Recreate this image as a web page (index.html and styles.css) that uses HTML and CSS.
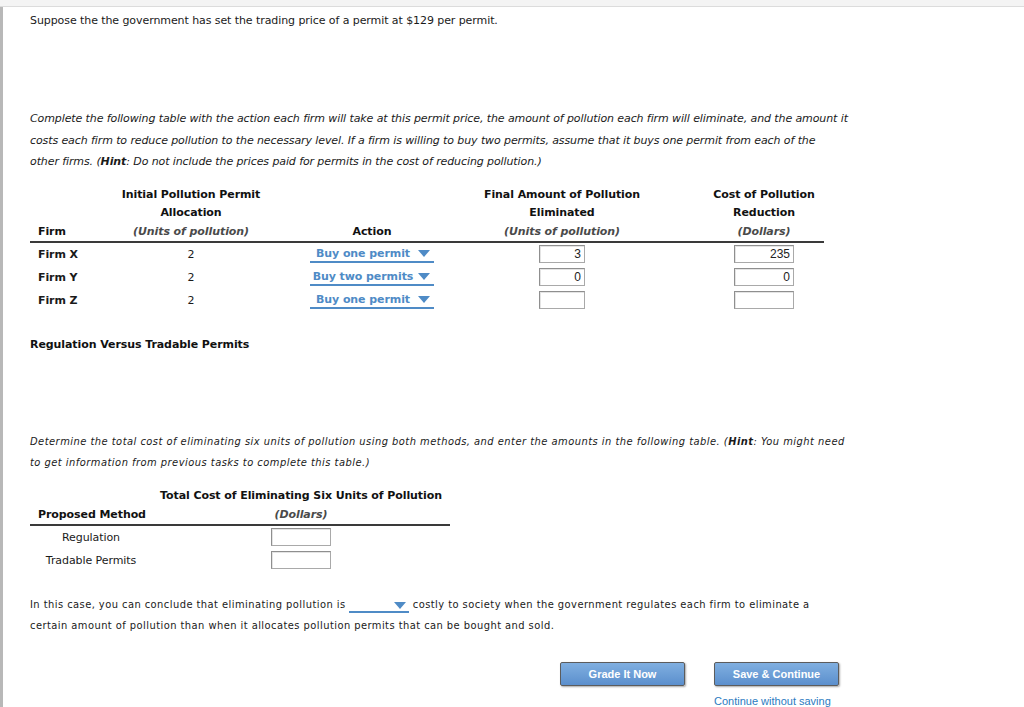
FILE: index.html
```html
<!DOCTYPE html>
<html lang="en">
<head>
<meta charset="utf-8">
<title>Tradable Permits</title>
<link rel="stylesheet" href="styles.css">
</head>
<body>
<div class="topbar"></div>
<div class="page">
  <p class="intro">Suppose the the government has set the trading price of a permit at $129 per permit.</p>

  <p class="instr">Complete the following table with the action each firm will take at this permit price, the amount of pollution each firm will eliminate, and the amount it<br>costs each firm to reduce pollution to the necessary level. If a firm is willing to buy two permits, assume that it buys one permit from each of the<br>other firms. (<b>Hint</b>: Do not include the prices paid for permits in the cost of reducing pollution.)</p>

  <div class="t1">
    <div class="th left">Firm</div>
    <div class="th"><span class="ttl">Initial Pollution Permit<br>Allocation</span><span class="units">(Units of pollution)</span></div>
    <div class="th">Action</div>
    <div class="th"><span class="ttl">Final Amount of Pollution<br>Eliminated</span><span class="units">(Units of pollution)</span></div>
    <div class="th cost"><span class="ttl">Cost of Pollution<br>Reduction</span><span class="units">(Dollars)</span></div>
    <div class="rule"></div>

    <div class="td left firm">Firm X</div>
    <div class="td">2</div>
    <div class="td"><span class="dd"><span class="dd-text">Buy one permit</span><span class="caret"></span></span></div>
    <div class="td"><span class="inp w46">3</span></div>
    <div class="td cost"><span class="inp w60">235</span></div>

    <div class="td left firm">Firm Y</div>
    <div class="td">2</div>
    <div class="td"><span class="dd"><span class="dd-text">Buy two permits</span><span class="caret"></span></span></div>
    <div class="td"><span class="inp w46">0</span></div>
    <div class="td cost"><span class="inp w60">0</span></div>

    <div class="td left firm">Firm Z</div>
    <div class="td">2</div>
    <div class="td"><span class="dd"><span class="dd-text">Buy one permit</span><span class="caret"></span></span></div>
    <div class="td"><span class="inp w46"></span></div>
    <div class="td cost"><span class="inp w60"></span></div>
  </div>

  <h3 class="section">Regulation Versus Tradable Permits</h3>

  <p class="instr narrow">Determine the total cost of eliminating six units of pollution using both methods, and enter the amounts in the following table. (<b>Hint</b>: You might need<br>to get information from previous tasks to complete this table.)</p>

  <div class="t2">
    <div class="th left"></div>
    <div class="th top">Total Cost of Eliminating Six Units of Pollution</div>
    <div class="th left">Proposed Method</div>
    <div class="th"><span class="units">(Dollars)</span></div>
    <div class="rule"></div>

    <div class="td">Regulation</div>
    <div class="td"><span class="inp w60"></span></div>
    <div class="td">Tradable Permits</div>
    <div class="td"><span class="inp w60"></span></div>
  </div>

  <p class="concl">In this case, you can conclude that eliminating pollution is <span class="dd small"><span class="caret"></span></span> costly to society when the government regulates each firm to eliminate a<br>certain amount of pollution than when it allocates pollution permits that can be bought and sold.</p>

  <div class="actions">
    <button class="btn" type="button">Grade It Now</button>
    <div class="save">
      <button class="btn" type="button">Save &amp; Continue</button>
      <a class="link" href="#">Continue without saving</a>
    </div>
  </div>
</div>
</body>
</html>
```

FILE: styles.css
```css
html, body {
  margin: 0;
  padding: 0;
  background: #fff;
}
body {
  font-family: "DejaVu Sans", Verdana, sans-serif;
  font-size: 11px;
  letter-spacing: -0.08px;
  color: #1a1a1a;
}
.topbar {
  height: 6px;
  background: #f4f4f4;
  border-bottom: 1px solid #dcdcdc;
}
.page {
  border-left: 3px solid #b8b8b8;
  padding: 7px 0 0 27px;
  min-height: 700px;
  box-sizing: border-box;
}
p { margin: 0; }
.intro {
  line-height: 14px;
}
.instr {
  margin-top: 80px;
  font-style: italic;
  letter-spacing: -0.1px;
  line-height: 21.5px;
  width: 900px;
}
.instr b { font-style: italic; }

/* table 1 */
.t1 {
  margin-top: 13px;
  width: 794px;
  display: grid;
  grid-template-columns: 80px 162px 200px 180px 172px;
}
.th {
  font-weight: bold;
  text-align: center;
  line-height: 18px;
  display: flex;
  flex-direction: column;
  justify-content: flex-end;
  color: #111;
}
.th.left, .td.left {
  text-align: left;
  padding-left: 8px;
}
.ttl { display: block; }
.units {
  display: block;
  margin-top: 1px;
  font-style: italic;
  color: #4a4a4a;
}
.cost { padding-left: 52px; }
.rule {
  grid-column: 1 / -1;
  height: 2px;
  background: #3a3a3a;
}
.td {
  height: 23px;
  display: flex;
  align-items: center;
  justify-content: center;
}
.td.left { justify-content: flex-start; }
.firm { font-weight: bold; }

.inp {
  display: inline-block;
  box-sizing: border-box;
  height: 18px;
  border: 1px solid #a9a9a9;
  border-top-color: #8f8f8f;
  border-left-color: #8f8f8f;
  box-shadow: inset 1px 1px 0 #e4e4e4;
  font-family: "Liberation Sans", Arial, sans-serif;
  font-size: 12px;
  letter-spacing: 0;
  line-height: 16px;
  text-align: right;
  padding-right: 3px;
  color: #222;
  background: #fff;
}
.w46 { width: 46px; }
.w60 { width: 60px; }

.dd {
  display: inline-flex;
  align-items: center;
  width: 124px;
  height: 17px;
  border-bottom: 2px solid #4f8bc6;
  color: #4f8bc6;
  font-weight: bold;
  box-sizing: border-box;
  vertical-align: middle;
}
.dd-text {
  flex: 1;
  text-align: center;
  padding-right: 2px;
}
.caret {
  width: 0;
  height: 0;
  border-left: 6px solid transparent;
  border-right: 6px solid transparent;
  border-top: 7px solid #4f8bc6;
  margin-right: 4px;
}

.section {
  margin: 26px 0 0;
  font-size: 11px;
  line-height: 14px;
  font-weight: bold;
  color: #111;
}

.narrow {
  margin-top: 79px;
  font-stretch: condensed;
  font-family: "DejaVu Sans Condensed", "DejaVu Sans", sans-serif;
  font-size: 11px;
  letter-spacing: 0.48px;
  width: 900px;
}

/* table 2 */
.t2 {
  margin-top: 13px;
  width: 420px;
  display: grid;
  grid-template-columns: 122px 298px;
}
.t2 .top { margin-bottom: 1px; }
.t2 .units { margin-top: 0; }

.concl {
  margin-top: 22px;
  line-height: 21.5px;
  font-family: "DejaVu Sans Condensed", "DejaVu Sans", sans-serif;
  font-stretch: condensed;
  letter-spacing: 0.45px;
  width: 900px;
}
.dd.small {
  display: inline-flex;
  justify-content: flex-end;
  align-items: flex-start;
  width: 60px;
  height: 11px;
  vertical-align: -1px;
}
.dd.small .caret {
  margin-right: 3px;
  margin-top: 0;
}

.actions {
  margin-top: 25px;
  padding-left: 530px;
  display: flex;
  gap: 29px;
  align-items: flex-start;
}
.save {
  display: flex;
  flex-direction: column;
  align-items: flex-start;
}
.btn {
  width: 125px;
  height: 24px;
  border: 1px solid #5c5c5c;
  border-radius: 2px;
  background: linear-gradient(#80afe0, #5b8fcd);
  color: #fff;
  font-family: "Liberation Sans", Arial, sans-serif;
  font-weight: bold;
  font-size: 11px;
  letter-spacing: 0;
  box-shadow: 1px 1px 2px rgba(0,0,0,0.35);
  padding: 0;
  cursor: pointer;
}
.link {
  margin-top: 8px;
  font-family: "Liberation Sans", Arial, sans-serif;
  font-size: 11px;
  letter-spacing: 0;
  line-height: 14px;
  color: #2b7bbf;
  text-decoration: none;
}
```
